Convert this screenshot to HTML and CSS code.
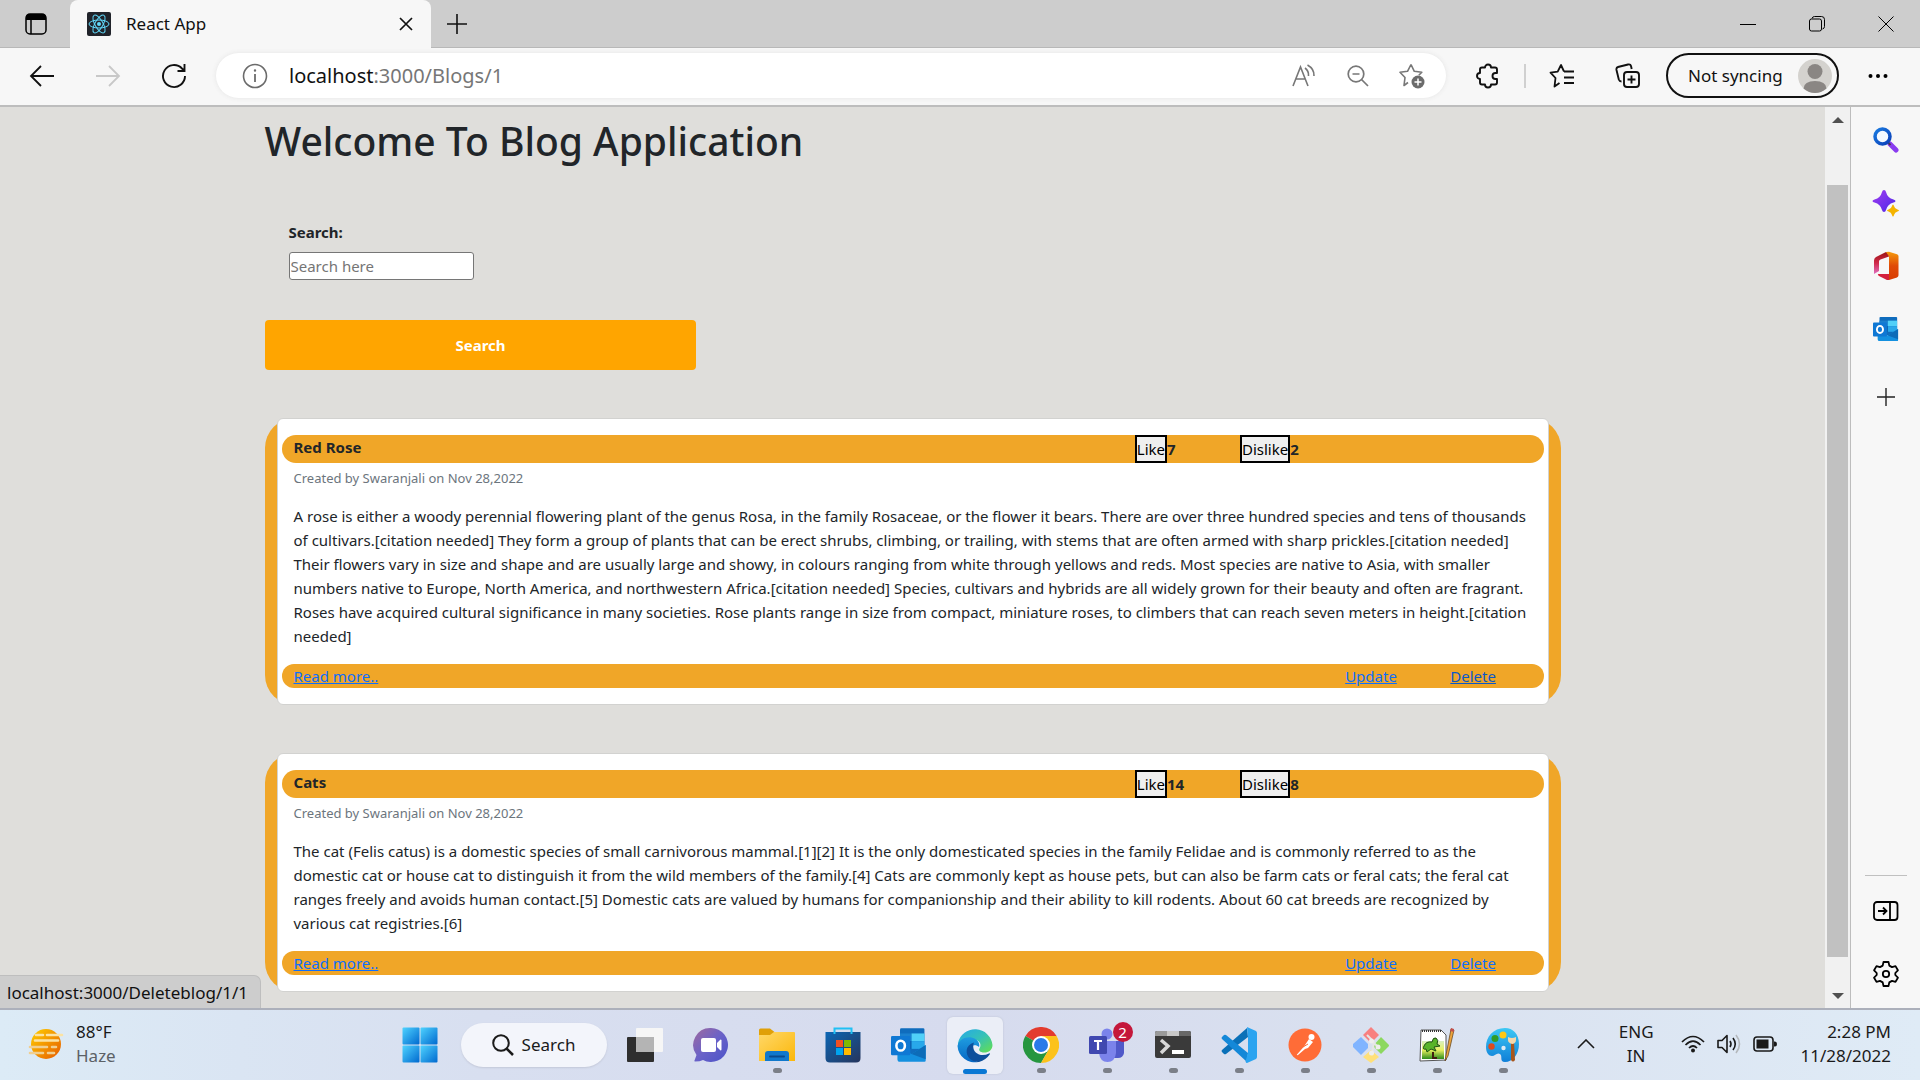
FILE: index.html
```html
<!DOCTYPE html>
<html lang="en">
<head>
<meta charset="utf-8">
<title>React App</title>
<link rel="stylesheet" href="styles.css">
</head>
<body>
<svg class="defs" aria-hidden="true">
  <defs>
    <linearGradient id="gWin" x1="0" y1="0" x2="1" y2="1"><stop offset="0" stop-color="#4fd3ff"/><stop offset="1" stop-color="#0069cf"/></linearGradient>
    <linearGradient id="gSun" x1="0" y1="0" x2="1" y2="1"><stop offset="0" stop-color="#ffd000"/><stop offset="1" stop-color="#e65a00"/></linearGradient>
    <linearGradient id="gChat" x1="0" y1="0" x2="1" y2="1"><stop offset="0" stop-color="#a06a9e"/><stop offset=".5" stop-color="#6a62c8"/><stop offset="1" stop-color="#4a52c8"/></linearGradient>
    <linearGradient id="gFolder" x1="0" y1="0" x2="1" y2="1"><stop offset="0" stop-color="#ffd869"/><stop offset="1" stop-color="#fbb70a"/></linearGradient>
    <linearGradient id="gStore" x1="0" y1="0" x2="1" y2="1"><stop offset="0" stop-color="#0c66b4"/><stop offset="1" stop-color="#26355c"/></linearGradient>
    <linearGradient id="gEdgeA" x1="0" y1="0" x2="1" y2="1"><stop offset="0" stop-color="#24a8e8"/><stop offset=".5" stop-color="#35c1b8"/><stop offset="1" stop-color="#66e04c"/></linearGradient>
    <linearGradient id="gEdgeB" x1="0" y1="0" x2="0" y2="1"><stop offset="0" stop-color="#1f9de0"/><stop offset="1" stop-color="#0566c4"/></linearGradient>
    <linearGradient id="gPaint" x1="0" y1="0" x2="0" y2="1"><stop offset="0" stop-color="#3cc8f4"/><stop offset="1" stop-color="#0f7fd8"/></linearGradient>
    <linearGradient id="gSpark" x1="0" y1="0" x2="1" y2="1"><stop offset="0" stop-color="#a23cf0"/><stop offset="1" stop-color="#4b28e8"/></linearGradient>
    <linearGradient id="gOffL" x1="0" y1="0" x2="0" y2="1"><stop offset="0" stop-color="#9c1414"/><stop offset=".5" stop-color="#d02a4a"/><stop offset="1" stop-color="#e070c0"/></linearGradient>
    <linearGradient id="gOffR" x1="0" y1="0" x2="0" y2="1"><stop offset="0" stop-color="#f59a0c"/><stop offset=".5" stop-color="#e04a08"/><stop offset="1" stop-color="#d83b01"/></linearGradient>
    <linearGradient id="gLens" x1="0" y1="0" x2="1" y2="1"><stop offset="0" stop-color="#1a7ae0"/><stop offset="1" stop-color="#0a3fb8"/></linearGradient>
    <linearGradient id="gNpp" x1="0" y1="0" x2="0" y2="1"><stop offset="0" stop-color="#d8efc0"/><stop offset=".5" stop-color="#e8f060"/><stop offset="1" stop-color="#2c8c1c"/></linearGradient>
    <symbol id="outlook" viewBox="0 0 28 28">
      <rect x="7" y="1" width="19" height="20" rx="1" fill="#0f6cbd"/>
      <path d="M7 5h9v6H7z" fill="#1a80cf"/><path d="M16 5h10v6H16z" fill="#50d0f8"/>
      <path d="M7 11h9v6H7z" fill="#0a5aa8"/><path d="M16 11h10v6H16z" fill="#28a8ea"/>
      <path d="M5 15l11 6 11-7v12q0 1-1 1H7q-2 0-2-2z" fill="#1490df"/><path d="M16 21l11-7v11z" fill="#0d6cb8"/>
      <rect x="0" y="7" width="15" height="15" rx="1" fill="#0f78d4"/>
      <ellipse cx="7.500" cy="14.500" rx="3.300" ry="3.800" fill="none" stroke="#fff" stroke-width="2"/>
    </symbol>
  </defs>
</svg>

<header class="tabbar">
  <button class="workspace" aria-label="Tab actions menu">
    <svg width="24" height="24" viewBox="0 0 24 24"><rect x="2" y="2" width="20" height="20" rx="4" fill="none" stroke="#000" stroke-width="1.500"/><path d="M2 8V5q0-3 3-3h14q3 0 3 3v3z"/><path d="M7 7v15" stroke="#000" stroke-width="1.500"/></svg>
  </button>
  <div class="tab">
    <svg width="24" height="24" viewBox="0 0 24 24"><rect width="24" height="24" rx="2" fill="#20232a"/><g fill="none" stroke="#61dafb" stroke-width="1"><ellipse cx="12" cy="12" rx="10" ry="4"/><ellipse cx="12" cy="12" rx="10" ry="4" transform="rotate(60 12 12)"/><ellipse cx="12" cy="12" rx="10" ry="4" transform="rotate(120 12 12)"/></g><circle cx="12" cy="12" r="2" fill="#61dafb"/></svg>
    <span class="tab-title">React App</span>
    <button class="tab-close" aria-label="Close tab"><svg width="14" height="14" viewBox="0 0 14 14"><path d="M1 1l12 12M13 1L1 13" stroke="#111" stroke-width="1.700"/></svg></button>
  </div>
  <button class="new-tab" aria-label="New tab"><svg width="22" height="22" viewBox="0 0 22 22"><path d="M11 1v20M1 11h20" stroke="#111" stroke-width="1.600"/></svg></button>
  <div class="window-controls">
    <button aria-label="Minimize"><svg width="16" height="16" viewBox="0 0 16 16"><path d="M0 8.500h16" stroke="#000"/></svg></button>
    <button aria-label="Restore"><svg width="16" height="16" viewBox="0 0 16 16" fill="none" stroke="#000"><rect x=".5" y="3" width="12" height="12" rx="2"/><path d="M3 2.500Q3.500.5 5.500.5h7Q15.500.5 15.500 3.500v7q0 2-2 2.500"/></svg></button>
    <button aria-label="Close"><svg width="16" height="16" viewBox="0 0 16 16"><path d="M.5.5l15 15M15.500.5l-15 15" stroke="#000"/></svg></button>
  </div>
</header>

<nav class="toolbar" aria-label="Browser toolbar">
  <button class="tool" aria-label="Back"><svg width="26" height="24" viewBox="0 0 26 24" fill="none" stroke="#111" stroke-width="1.800"><path d="M12 2L2 12l10 10M2 12h23"/></svg></button>
  <button class="tool" aria-label="Forward" disabled><svg width="26" height="24" viewBox="0 0 26 24" fill="none" stroke="#c8c8c8" stroke-width="1.800"><path d="M14 2l10 10-10 10M24 12H1"/></svg></button>
  <button class="tool" aria-label="Refresh"><svg width="26" height="26" viewBox="0 0 26 26" fill="none" stroke="#111" stroke-width="1.900"><path d="M24 13a11 11 0 1 1-3-7.500l2.500 2.500M23.500 1v7h-7"/></svg></button>
  <div class="omnibox">
    <svg width="26" height="26" viewBox="0 0 26 26"><circle cx="13" cy="13" r="11.500" fill="none" stroke="#6b6b6b" stroke-width="1.600"/><path d="M13 11v8" stroke="#6b6b6b" stroke-width="1.800"/><circle cx="13" cy="7.500" r="1.200" fill="#6b6b6b"/></svg>
    <span class="url">localhost<span class="url-path">:3000/Blogs/1</span></span>
    <button aria-label="Read aloud"><svg width="24" height="24" viewBox="0 0 24 24" fill="none" stroke="#777" stroke-width="1.600"><path d="M1 22L8.500 3 16 22M4 15h9M13 4q4 3 3.500 8M15.500 1q7 4 6.500 11"/></svg></button>
    <button aria-label="Zoom"><svg width="22" height="22" viewBox="0 0 22 22" fill="none" stroke="#777" stroke-width="1.700"><circle cx="9" cy="9" r="7.800"/><path d="M14.500 14.500L21 21M5.500 9h7"/></svg></button>
    <button aria-label="Add to favorites"><svg width="26" height="26" viewBox="0 0 26 26"><path d="M12 1.500l3.300 6.800 7.500 1-3 3M9 19.500l-4 3 1-8L1 9.300l7.500-1L12 1.500" fill="none" stroke="#777" stroke-width="1.600" stroke-linejoin="round"/><circle cx="19" cy="19" r="6.500" fill="#6b6b6b"/><path d="M19 15.500v7M15.500 19h7" stroke="#fff" stroke-width="1.500"/></svg></button>
  </div>
  <button class="tool tool-ext" aria-label="Extensions"><svg width="26" height="26" viewBox="0 0 26 26"><path d="M7 4.500h3a3 3 0 0 1 6 0h4q2 0 2 2V10h-1.500a3 3 0 0 0 0 6H22v3.500q0 2-2 2h-4a3 3 0 0 1-6 0H7q-2 0-2-2V16a3 3 0 0 1 0-6V6.500q0-2 2-2z" fill="none" stroke="#111" stroke-width="1.900" stroke-linejoin="round"/></svg></button>
  <span class="divider"></span>
  <button class="tool tool-fav" aria-label="Favorites"><svg width="26" height="26" viewBox="0 0 26 26" fill="none" stroke="#111" stroke-width="1.800" stroke-linejoin="round"><path d="M15 8.500L12 2 8.700 8.700 1.500 9.700l5 5.300-1 8.500 5-3.500M15 8.500h10M15 14.500h10M15 20h10"/></svg></button>
  <button class="tool" aria-label="Collections"><svg width="26" height="26" viewBox="0 0 26 26" fill="none" stroke="#111" stroke-width="1.900"><rect x="9" y="9" width="15" height="15" rx="3"/><path d="M16.500 12.500v8M12.500 16.500h8M6.500 18.500q-2 0-2.700-2L1.500 7q-.5-2.500 1.500-3l10-2.500q2.500-.5 3 1.500l.7 3"/></svg></button>
  <button class="profile">Not syncing
    <svg width="34" height="34" viewBox="0 0 34 34"><circle cx="17" cy="17" r="17" fill="#d4d2ce"/><circle cx="17" cy="12.500" r="7.500" fill="#8a8683"/><path d="M5.500 29.500Q6 22 17 22t11.500 7.500Q23 34 17 34T5.500 29.500z" fill="#8a8683"/></svg>
  </button>
  <button class="tool" aria-label="Settings and more"><svg width="20" height="6" viewBox="0 0 20 6"><circle cx="2.500" cy="3" r="2"/><circle cx="10" cy="3" r="2"/><circle cx="17.500" cy="3" r="2"/></svg></button>
</nav>

<div class="viewport">
  <main class="page">
    <div class="container">
      <h1>Welcome To Blog Application</h1>
      <form class="search" onsubmit="return false">
        <div class="field">
          <label for="q">Search:</label>
          <input id="q" type="text" placeholder="Search here">
        </div>
        <button class="search-btn" type="submit">Search</button>
      </form>

      <article class="blog">
        <div class="card">
          <div class="band head">
            <h2>Red Rose</h2>
            <div class="vote"><button>Like</button><b>7</b></div>
            <div class="vote"><button>Dislike</button><b>2</b></div>
          </div>
          <p class="meta">Created by Swaranjali on Nov 28,2022</p>
          <p class="text">A rose is either a woody perennial flowering plant of the genus Rosa, in the family Rosaceae, or the flower it bears. There are over three hundred species and tens of thousands of cultivars.[citation needed] They form a group of plants that can be erect shrubs, climbing, or trailing, with stems that are often armed with sharp prickles.[citation needed] Their flowers vary in size and shape and are usually large and showy, in colours ranging from white through yellows and reds. Most species are native to Asia, with smaller numbers native to Europe, North America, and northwestern Africa.[citation needed] Species, cultivars and hybrids are all widely grown for their beauty and often are fragrant. Roses have acquired cultural significance in many societies. Rose plants range in size from compact, miniature roses, to climbers that can reach seven meters in height.[citation needed]</p>
          <div class="band foot">
            <a class="more" href="#">Read more..</a>
            <a href="#">Update</a>
            <a class="active" href="#">Delete</a>
          </div>
        </div>
      </article>

      <article class="blog">
        <div class="card">
          <div class="band head">
            <h2>Cats</h2>
            <div class="vote"><button>Like</button><b>14</b></div>
            <div class="vote"><button>Dislike</button><b>8</b></div>
          </div>
          <p class="meta">Created by Swaranjali on Nov 28,2022</p>
          <p class="text">The cat (Felis catus) is a domestic species of small carnivorous mammal.[1][2] It is the only domesticated species in the family Felidae and is commonly referred to as the domestic cat or house cat to distinguish it from the wild members of the family.[4] Cats are commonly kept as house pets, but can also be farm cats or feral cats; the feral cat ranges freely and avoids human contact.[5] Domestic cats are valued by humans for companionship and their ability to kill rodents. About 60 cat breeds are recognized by various cat registries.[6]</p>
          <div class="band foot">
            <a class="more" href="#">Read more..</a>
            <a href="#">Update</a>
            <a href="#">Delete</a>
          </div>
        </div>
      </article>
    </div>
  </main>

  <div class="scrollbar" aria-hidden="true">
    <svg width="12" height="6" viewBox="0 0 12 6"><path d="M0 6l6-6 6 6z" fill="#505050"/></svg>
    <div class="thumb"></div>
    <svg width="12" height="6" viewBox="0 0 12 6"><path d="M0 0l6 6 6-6z" fill="#505050"/></svg>
  </div>

  <aside class="sidebar">
    <button aria-label="Search"><svg width="26" height="26" viewBox="0 0 26 26"><path d="M17 17l6 6" stroke="#8a3cf0" stroke-width="5" stroke-linecap="round"/><path d="M14.500 15l3 3" stroke="#4a3a50" stroke-width="2"/><circle cx="9.500" cy="9.500" r="7.500" fill="#f4f9ff" stroke="url(#gLens)" stroke-width="3.500"/></svg></button>
    <button aria-label="Discover"><svg width="28" height="28" viewBox="0 0 28 28"><path d="M12 1q1.500 0 2 2 1.500 6 7.500 7.500 2 .5 2 1.500t-2 1.500q-6 1.500-7.500 7.500-.5 2-2 2t-2-2Q8.500 15 2.500 13.500q-2-.5-2-1.500t2-1.500Q8.500 9 10 3q.5-2 2-2z" fill="url(#gSpark)"/><path d="M21 15.500q.7 0 1 1.500.7 3 3.500 3.500 1.500.3 1.500 1t-1.500 1Q22.700 23 22 26q-.3 1.500-1 1.500T20 26q-.7-3-3.500-3.500-1.500-.3-1.500-1t1.500-1Q19.300 20 20 17q.3-1.500 1-1.500z" fill="#f5b400"/></svg></button>
    <button aria-label="Office"><svg width="26" height="30" viewBox="0 0 26 30"><path d="M13 1L3 6Q1 7 1 9.500V23l5-3V10.500Q6 9 7.500 8.500L16 5.500V2z" fill="url(#gOffL)"/><path d="M13 1l3-.3 8 2.500q1.500.5 1.500 2v19q0 1.500-1.500 2.200l-8 2.600q-1.500.3-2.500-.5L16 25V5.500z" fill="url(#gOffR)"/><path d="M5.500 23H16v5.700q-2 .6-3.500-.4L6 25q-2-1.500-.5-2z" fill="#d4203c"/></svg></button>
    <button aria-label="Outlook"><svg width="26" height="26"><use href="#outlook"/></svg></button>
    <button class="add" aria-label="Customize sidebar"><svg width="18" height="18" viewBox="0 0 18 18"><path d="M9 0v18M0 9h18" stroke="#222" stroke-width="1.400"/></svg></button>
    <hr>
    <button aria-label="Hide sidebar"><svg width="26" height="20" viewBox="0 0 26 20" fill="none" stroke="#000" stroke-width="1.800"><rect x="1" y="1" width="23.500" height="18" rx="3"/><path d="M17 1v18M5 10h9M10 6.500l3.500 3.500-3.500 3.500"/></svg></button>
    <button aria-label="Settings"><svg width="26" height="26" viewBox="0 0 26 26" fill="none" stroke="#000" stroke-width="1.800" stroke-linejoin="round"><path d="M10.500 1h5l.8 3.600 2.700 1.500 3.500-1 2.400 4.200L22.300 12v2l2.600 2.700-2.400 4.200-3.500-1-2.700 1.500-.8 3.600h-5l-.8-3.600L7 19.900l-3.500 1-2.400-4.200L3.700 14v-2L1.100 9.300l2.400-4.200 3.500 1 2.700-1.500z"/><circle cx="13" cy="13" r="3.200"/></svg></button>
  </aside>
  <div class="status">localhost:3000/Deleteblog/1/1</div>
</div>

<footer class="taskbar">
  <div class="weather">
    <svg width="36" height="32" viewBox="0 0 36 32"><circle cx="18" cy="16" r="15" fill="url(#gSun)"/><g stroke-linecap="round" stroke-width="2.600" fill="none"><path d="M8 7h7M19 7h15M7 12.500h23" stroke="#fbe3a4"/><path d="M2 19h17M24 19h4M2 25h13M20 25h6" stroke="#f0cf90"/></g></svg>
    <div class="stack"><span>88°F</span><span class="muted">Haze</span></div>
  </div>
  <div class="apps">
    <button class="app" aria-label="Start"><svg width="36" height="36" viewBox="0 0 36 36"><g fill="url(#gWin)"><rect x=".5" y=".5" width="17" height="17" rx="1"/><rect x="18.500" y=".5" width="17" height="17" rx="1"/><rect x=".5" y="18.500" width="17" height="17" rx="1"/><rect x="18.500" y="18.500" width="17" height="17" rx="1"/></g></svg></button>
    <button class="task-search"><svg width="22" height="22" viewBox="0 0 22 22" fill="none" stroke="#1a1a1a" stroke-width="2"><circle cx="9" cy="9" r="7.800"/><path d="M14.500 14.500L21 21" stroke-width="2.500"/></svg>Search</button>
    <button class="app" aria-label="Task view"><svg width="36" height="36" viewBox="0 0 36 36"><rect y="10" width="27" height="25" rx="1" fill="#2e2e2e"/><rect x="9" y="1" width="27" height="24" rx="1" fill="#f6f6f6"/><rect x="9" y="10" width="18" height="15" fill="#b4b4b4"/></svg></button>
    <button class="app" aria-label="Chat"><svg width="36" height="36" viewBox="0 0 36 36"><path d="M18 1a17 17 0 1 1-8 32q-3 1.500-8 1.500-1 0-.5-1L3.500 28A17 17 0 0 1 18 1z" fill="url(#gChat)"/><rect x="8" y="11" width="15" height="14" rx="2" fill="#fff"/><path d="M24 16l3.500-3.500q1 0 1 1v9q0 1-1 1L24 20z" fill="#fff"/></svg></button>
    <button class="app open" aria-label="File Explorer"><svg width="38" height="36" viewBox="0 0 38 36"><path d="M1 8V3q0-1.500 1.500-1.500H12L16.500 5H36v5H1z" fill="#e0a008"/><path d="M1 8h11l4-3h20q1 0 1 1v28H1z" fill="url(#gFolder)"/><path d="M7 34v-7q0-3 3-3h18q3 0 3 3v7z" fill="#1078cc"/><path d="M12 29.500h14" stroke="#0a4a8c" stroke-width="2" stroke-linecap="round"/></svg></button>
    <button class="app" aria-label="Microsoft Store"><svg width="36" height="36" viewBox="0 0 36 36"><path d="M.5 5h35v26q0 4.500-4.500 4.500H5Q.5 35.500.5 31z" fill="url(#gStore)"/><path d="M9.500 7V1.500h17V7" fill="none" stroke="#20c0f4" stroke-width="2"/><path d="M11 13h7v7h-7z" fill="#f25022"/><path d="M19 13h7v7h-7z" fill="#7fba00"/><path d="M11 21h7v7h-7z" fill="#00a4ef"/><path d="M19 21h7v7h-7z" fill="#ffb900"/></svg></button>
    <button class="app" aria-label="Outlook"><svg width="36" height="36"><use href="#outlook"/></svg></button>
    <button class="app open current" aria-label="Microsoft Edge"><svg width="36" height="36" viewBox="0 0 36 36"><path d="M1 16A17.500 17.500 0 0 1 35.500 18c0 5-4 7.500-8 7.500-5 0-6-2.500-5-4 1.500-2.500 1.500-6-2-8C14 10 4 11 1 20z" fill="url(#gEdgeA)"/><path d="M.5 19C2 11 12 8 18.500 12c3 2 4.500 5 3.500 8-4-4-9.500-1-9.500 4.500 0 5 4 9.500 9 10.500A17.500 17.500 0 0 1 .5 19z" fill="url(#gEdgeB)"/><path d="M17 15.500C8 18 8 27 13 32q4 3.500 9 3 7-2 11-8 0-1-1-.5-5 2.500-10 1c-5-2-7-7-5-12z" fill="#0d4f9c"/></svg></button>
    <button class="app open" aria-label="Google Chrome"><svg width="36" height="36" viewBox="0 0 36 36"><path d="M18 18L2.400 9A18 18 0 0 1 33.600 9z" fill="#e33b2e"/><path d="M18 18L2.400 9A18 18 0 0 0 18 36l7.800-13.500z" fill="#26963f"/><path d="M18 9h15.600A18 18 0 0 1 18 36l7.800-13.500z" fill="#fcc21b"/><circle cx="18" cy="18" r="9" fill="#fff"/><circle cx="18" cy="18" r="7" fill="#2a7ae8"/></svg></button>
    <button class="app open" aria-label="Teams, 2 notifications"><svg width="36" height="36" viewBox="0 0 36 36"><circle cx="18" cy="7" r="5.500" fill="#7b83eb"/><path d="M24 14h11v12q-1 5-6 5h-5z" fill="#5059c9"/><path d="M10 14h17v12q-1 9-8.500 9T10 26z" fill="#7b83eb"/><rect y="9" width="18" height="18" rx="1.500" fill="#4048b0"/><path d="M5 14h8M9 14v9" stroke="#fff" stroke-width="2.200"/></svg><span class="badge">2</span></button>
    <button class="app open" aria-label="Terminal"><svg width="36" height="36" viewBox="0 0 36 36"><rect y="4" width="36" height="27" rx="2" fill="#3a3a3a"/><path d="M0 9V6q0-2 2-2h10v5z" fill="#9a9a9a"/><path d="M12 4h12v5H12z" fill="#c8c8c8"/><path d="M24 4h10q2 0 2 2v3H24z" fill="#686868"/><path d="M6 13l7 6-7 7" fill="none" stroke="#d8d8d8" stroke-width="3.500"/><rect x="17" y="23" width="12" height="4" fill="#fff"/></svg></button>
    <button class="app open" aria-label="Visual Studio Code"><svg width="36" height="36" viewBox="0 0 36 36"><path d="M26 1L1 23q-1 1 0 2l2 2q1 .5 2 0L27 10z" fill="#0a70b8"/><path d="M26 35L1 12q-1-1 0-2l2-2q1-.5 2 0l22 18z" fill="#1488d8"/><path d="M26 0l9 4q1 1 1 2v24q0 1-1 2l-9 4q-1 0-1.500-1.500L27 26V10z" fill="#2ba4f0"/></svg></button>
    <button class="app open" aria-label="Postman"><svg width="36" height="36" viewBox="0 0 36 36"><circle cx="18" cy="18" r="16.500" fill="#ff6c37"/><circle cx="24.500" cy="10" r="3" fill="#fff"/><path d="M22 12l4 3-5 6-3 1-7 6q-1.500.5-1-.5l7-8z" fill="#fff"/><path d="M16 20l5-3" stroke="#ff6c37"/></svg></button>
    <button class="app open" aria-label="Git"><svg width="36" height="36" viewBox="0 0 36 36"><path d="M18 0l8 8-8 8-8-8z" fill="#f88080"/><path d="M8 10l7 7v4l-7 7-8-8q-1-2 0-3z" fill="#80b4ff"/><path d="M28 10l7.500 7.500q1 1 0 2L28 27l-8-8z" fill="#8cd860"/><path d="M18 23l8 7-8 6-8-6z" fill="#ffe07a"/><path d="M14 8l7 7-2 13M20 15l6 6" stroke="#e6e6e6" stroke-width="2" fill="none"/><circle cx="18.500" cy="14" r="2.500" fill="#eee"/><circle cx="18.500" cy="26" r="2.500" fill="#eee"/><circle cx="25" cy="20" r="2.500" fill="#eee"/></svg></button>
    <button class="app open" aria-label="Notepad++"><svg width="36" height="36" viewBox="0 0 36 36"><path d="M2 3h20l5 5v25l-26 1z" fill="#fff" stroke="#555"/><path d="M3 4h19" stroke="#333" stroke-width="2" stroke-dasharray="1 1"/><path d="M3 14h22v18H3z" fill="url(#gNpp)"/><path d="M5 19q2-5 8-4 1-5 4-4 3 2 1 6l3 2-6 1 2 4-5-2-4 3-1-3q-4 1-2-3z" fill="#58b428" stroke="#1e5014"/><path d="M14 25v6h4" stroke="#402010" stroke-width="2" fill="none"/><path d="M32 2l3 1-6 26-3 5 1-6z" fill="#eda43c" stroke="#5a3c14" stroke-width=".7"/><path d="M32 1l3 1v3l-4-1z" fill="#c0504a"/></svg></button>
    <button class="app open" aria-label="Paint"><svg width="36" height="36" viewBox="0 0 36 36"><path d="M20 1C8 1 1 10 1 20c0 6 3 9 6 9s5-4 8-2-1 8 5 8c8 0 14-8 14-18S28 1 20 1z" fill="url(#gPaint)"/><circle cx="18" cy="8" r="3.500" fill="#ffc814"/><circle cx="10" cy="11.500" r="3.500" fill="#2f9c28"/><circle cx="6.500" cy="19.500" r="3.200" fill="#e04a1c"/><circle cx="18.500" cy="21" r="2.200" fill="#dceaf4"/><path d="M26 15h3l1 18q-2 3-4 0z" fill="#a8561c"/><path d="M23 10q4 2 8 0v3q0 3-3.500 4Q23 16 23 13z" fill="#f4d8ac"/></svg></button>
  </div>
  <div class="tray">
    <svg class="chevron" width="18" height="10" viewBox="0 0 18 10"><path d="M1 9l8-8 8 8" fill="none" stroke="#1a1a1a" stroke-width="1.600"/></svg>
    <div class="stack lang"><span>ENG</span><span>IN</span></div>
    <svg width="24" height="18" viewBox="0 0 24 18" fill="none" stroke="#1a1a1a" stroke-width="1.700"><path d="M1 7q11-11 22 0M4.500 10q7.500-7.500 15 0M8 13q4-4 8 0"/><circle cx="12" cy="15.500" r="2" fill="#1a1a1a" stroke="none"/></svg>
    <svg width="24" height="20" viewBox="0 0 24 20" fill="none" stroke="#1a1a1a" stroke-width="1.600" stroke-linejoin="round"><path d="M1 6.500h4l5-5v17l-5-5H1zM13 7q2 3 0 6M16 4q4.500 6 0 12"/><path d="M19 1q7 9 0 18" stroke="#b4b8bc"/></svg>
    <svg width="24" height="16" viewBox="0 0 24 16"><rect x="1" y="1" width="19" height="14" rx="3" fill="none" stroke="#1a1a1a" stroke-width="1.600"/><rect x="3.500" y="3.500" width="12" height="9" fill="#1a1a1a"/><path d="M21 5.500h1q2 0 2 2.500t-2 2.500h-1z" fill="#1a1a1a"/></svg>
    <div class="stack clock"><span>2:28 PM</span><span>11/28/2022</span></div>
  </div>
</footer>
</body>
</html>
```
FILE: styles.css
```css
* { box-sizing: border-box; }

body {
  margin: 0;
  height: 100vh;
  display: flex;
  flex-direction: column;
  overflow: hidden;
  font-family: "Noto Sans", "Open Sans", sans-serif;
  font-size: 15px;
  line-height: 24px;
  color: #212529;
}

button { font: inherit; color: inherit; background: none; border: 0; padding: 0; }
h1, h2, p { margin: 0; }
svg { display: block; flex: none; }
.defs { position: absolute; width: 0; height: 0; }

/* Tab strip */
.tabbar {
  flex: none;
  height: 48px;
  display: flex;
  background: #cdcdcd;
  border-bottom: 1px solid #b8b8b8;
}
.tabbar button { display: grid; place-items: center; }
.workspace { width: 70px; padding-left: 2px; }
.tab {
  width: 361px;
  height: 48px;
  padding: 0 18px 0 17px;
  display: flex;
  align-items: center;
  gap: 15px;
  background: #f7f7f7;
  border-radius: 8px 8px 0 0;
  color: #111;
  font-size: 17px;
}
.tab-title { flex: 1; }
.new-tab { width: 52px; }
.window-controls { margin-left: auto; display: flex; }
.window-controls button { width: 69px; }

/* Toolbar */
.toolbar {
  flex: none;
  height: 59px;
  padding: 0 9px 2px;
  display: flex;
  align-items: center;
  background: #f7f7f7;
  border-bottom: 2px solid #bdbdbd;
}
.tool { width: 66px; height: 45px; display: grid; place-items: center; }
.tool-ext { margin-left: 9px; }
.divider { width: 2px; height: 24px; margin: 0 3px; background: #d0d0d0; }
.omnibox {
  flex: 1;
  height: 45px;
  margin-left: 9px;
  padding: 0 7px 0 26px;
  display: flex;
  align-items: center;
  background: #fff;
  border-radius: 23px;
  box-shadow: 0 0 5px #e4e4e4;
}
.omnibox button { width: 54px; display: grid; place-items: center; }
.url { flex: 1; margin-left: 21px; font-size: 20px; color: #111; }
.url-path { color: #767676; }
.profile {
  width: 173px;
  height: 45px;
  margin: 0 6px 0 5px;
  padding: 0 5px 0 20px;
  display: flex;
  align-items: center;
  justify-content: space-between;
  border: 2px solid #111;
  border-radius: 23px;
  font-size: 17px;
  color: #111;
}

/* Browser viewport */
.viewport { flex: 1; min-height: 0; display: flex; position: relative; border-bottom: 2px solid #acb0bb; }
.page { flex: 1; overflow: hidden; background: #dfdedb; }
.container { max-width: 1320px; margin: 0 auto; padding: 10px 12px 0; }
h1 { font-size: 39px; line-height: 48px; font-weight: 500; }

.search { margin-bottom: 48px; }
.field { padding: 55px 24px 40px; display: flex; flex-direction: column; align-items: flex-start; gap: 8px; }
.field label { font-weight: 700; }
.field input {
  width: 185px;
  height: 28px;
  padding: 0 1px;
  border: 1px solid #767676;
  border-radius: 3px;
  background: #fff;
  font: inherit;
}
.field input::placeholder { color: #757575; }
.search-btn {
  display: block;
  width: 33.333%;
  height: 50px;
  background: #ffa500;
  border-radius: 4px;
  color: #fff;
  font-weight: 700;
}

.blog { margin-bottom: 48px; padding: 0 12px; background: #f0a628; border-radius: 30px; }
.card { padding: 16px 4px; background: #fff; border: 1px solid #d2d2d0; border-radius: 6px; }
.band {
  display: grid;
  grid-template-columns: repeat(12, minmax(0, 1fr));
  background: #f0a628;
  border-radius: 15px;
}
.band > * { padding-left: 12px; }
.head { height: 28px; }
.head h2 { grid-column: span 8; font-size: 15px; line-height: 24px; }
.vote { display: flex; white-space: nowrap; line-height: 28px; }
.vote button { background: #efefef; border: 2px solid #000; line-height: 24px; color: #000; }
.more { grid-column: span 10; }
.foot a { color: #0d6efd; text-decoration: underline; }
.foot .active { color: #0a58ca; }
.meta { margin: 5px 12px 15px; font-size: 13px; line-height: 21px; color: #6c757d; }
.text { margin: 0 12px 16px; }

.scrollbar {
  width: 25px;
  padding: 10px 2px 9px;
  display: flex;
  flex-direction: column;
  align-items: center;
  background: #f1f1f1;
}
.thumb { flex: 1; width: 100%; margin: 62px 0 36px; background: #c1c1c1; }

.sidebar {
  width: 70px;
  padding: 1px 0 3px;
  display: flex;
  flex-direction: column;
  align-items: center;
  background: #f7f7f7;
  border-left: 1px solid #bdbdbd;
}
.sidebar button { width: 63px; height: 63px; display: grid; place-items: center; }
.sidebar .add { margin-top: 5px; }
.sidebar hr { width: 42px; height: 1px; margin: auto 0 3px; border: 0; background: #c0c0c0; }

.status {
  position: absolute;
  left: 0;
  bottom: 0;
  height: 33px;
  padding: 0 12px 0 7px;
  background: #cdcdcd;
  border: 1px solid #bebebe;
  border-width: 1px 1px 0 0;
  border-radius: 0 7px 0 0;
  font-size: 17px;
  line-height: 33px;
  color: #111;
}

/* Taskbar */
.taskbar {
  flex: none;
  height: 70px;
  display: grid;
  grid-template-columns: 1fr auto 1fr;
  background: linear-gradient(90deg, #dcebf6, #d8dff0 25%, #d6dbee 50%, #d9e0ef 70%, #dfebf6);
  color: #1a1a1a;
  font-size: 17px;
}
.weather, .tray { display: flex; align-items: center; padding-bottom: 2px; }
.weather { padding-left: 28px; gap: 12px; }
.stack { display: flex; flex-direction: column; }
.muted { color: #5c6166; }
.apps { display: flex; align-items: center; padding-left: 2px; }
.app { position: relative; width: 66px; height: 70px; display: grid; place-items: center; }
.open::after {
  content: "";
  position: absolute;
  left: 29px;
  bottom: 7px;
  width: 9px;
  height: 5px;
  border-radius: 3px;
  background: #7b7f88;
}
.current { background: #ebeef7; width: 56px; height: 57px; margin: 0 5px; border-radius: 6px; box-shadow: 0 0 2px #b9bfd0; }
.current::after { left: 16px; bottom: 0; width: 24px; background: #0a78d4; }
.badge {
  position: absolute;
  left: 39px;
  top: 12px;
  width: 20px;
  height: 20px;
  border-radius: 10px;
  background: #c4173a;
  color: #fff;
  font-size: 15px;
  line-height: 20px;
}
.task-search {
  width: 146px;
  height: 44px;
  margin: 0 5px 0 8px;
  display: flex;
  align-items: center;
  justify-content: center;
  gap: 8px;
  background: #f3f5fb;
  border-radius: 22px;
  box-shadow: 0 1px 2px #c3c8d8;
}
.tray { justify-content: flex-end; padding-right: 29px; gap: 12px; }
.lang { align-items: center; margin: 0 15px 0 12px; }
.clock { align-items: flex-end; margin-left: 12px; }
```
